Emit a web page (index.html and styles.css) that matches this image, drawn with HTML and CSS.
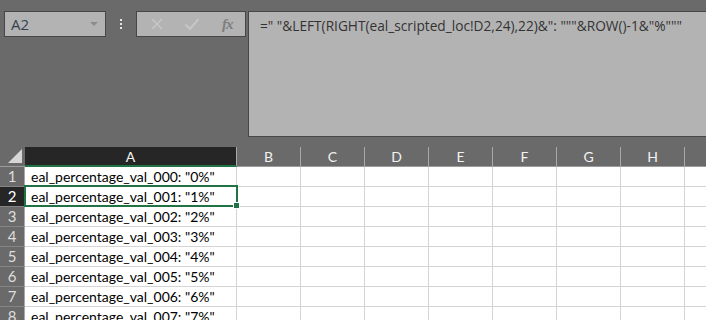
FILE: index.html
```html
<!DOCTYPE html>
<html>
<head>
  <title>Sheet - eal_percentage</title>
  <link rel="stylesheet" href="styles.css">
</head>
<body>
  <div class="toolbar">
    <div class="name-box">
      <span class="name-text">A2</span>
      <span class="name-arrow"></span>
    </div>
    <div class="grip"><i></i><i></i><i></i></div>
    <div class="fx-buttons">
      <svg class="btn-icon btn-cancel" width="14" height="14" viewBox="0 0 14 14">
        <path d="M2 2 L12 12 M12 2 L2 12" stroke="#c6c6c6" stroke-width="1.6" fill="none"/>
      </svg>
      <svg class="btn-icon btn-enter" width="16" height="14" viewBox="0 0 16 14">
        <path d="M1.5 7.5 L6 12 L14.5 2" stroke="#c6c6c6" stroke-width="2" fill="none"/>
      </svg>
      <span class="fx-label">fx</span>
    </div>
    <div class="formula-bar">=" "&amp;LEFT(RIGHT(eal_scripted_loc!D2,24),22)&amp;": """&amp;ROW()-1&amp;"%"""</div>
  </div>

  <div class="sheet">
    <div class="grid">
      <div class="corner"><span class="corner-tri"></span></div>
      <div class="col-head selected">A</div>
      <div class="col-head">B</div>
      <div class="col-head">C</div>
      <div class="col-head">D</div>
      <div class="col-head">E</div>
      <div class="col-head">F</div>
      <div class="col-head">G</div>
      <div class="col-head">H</div>
      <div class="col-head"></div>
    </div>
    <div class="grid" id="rows"></div>
    <div class="selection"><span class="fill-handle"></span></div>
  </div>

  <script>
    var rows = document.getElementById("rows");
    var html = "";
    for (var r = 1; r <= 8; r++) {
      var num = ("00" + (r - 1)).slice(-3);
      html += '<div class="row-head' + (r === 2 ? ' selected' : '') + '">' + r + '</div>';
      html += '<div class="cell">eal_percentage_val_' + num + ': "' + (r - 1) + '%"</div>';
      for (var c = 0; c < 8; c++) {
        html += '<div class="cell"></div>';
      }
    }
    rows.innerHTML = html;
  </script>
</body>
</html>
```

FILE: styles.css
```css
body {
  margin: 0;
  background-color: #6a6a6a;
  font-family: "Open Sans", sans-serif;
  overflow: hidden;
}

.toolbar {
  display: flex;
  align-items: flex-start;
  padding: 11px 0 0 4px;
  height: 126px;
  border-top: 2px solid #707070;
  margin-top: -2px;
}

.name-box {
  width: 87px;
  height: 24px;
  border: 1px solid #464646;
  background-color: #b3b3b3;
  display: flex;
  align-items: center;
  justify-content: space-between;
  padding: 0 7px 0 6px;
}

.name-text {
  font-size: 15px;
  color: #344150;
}

.name-arrow {
  width: 0;
  height: 0;
  border-left: 4px solid transparent;
  border-right: 4px solid transparent;
  border-top: 4px solid #8c8c8c;
}

.grip {
  width: 30px;
  height: 26px;
  display: flex;
  flex-direction: column;
  align-items: center;
  justify-content: center;
  gap: 2px;
}

.grip i {
  width: 2px;
  height: 2px;
  background-color: #e6e6e6;
}

.fx-buttons {
  width: 95px;
  height: 24px;
  border: 1px solid #464646;
  background-color: #b3b3b3;
  display: flex;
  align-items: center;
  padding: 0 0 0 13px;
  margin-right: 2px;
}

.btn-icon {
  display: block;
}

.btn-cancel {
  margin-right: 20px;
}

.btn-enter {
  margin-right: 22px;
}

.fx-label {
  font-family: "Liberation Serif", serif;
  font-style: italic;
  font-weight: bold;
  font-size: 15px;
  color: #7e7e7e;
  letter-spacing: -1px;
}

.formula-bar {
  flex: 1;
  height: 126px;
  border: 1px solid #464646;
  border-right: none;
  background-color: #b3b3b3;
  padding: 4px 0 0 11px;
  font-size: 13.7px;
  color: #333;
  white-space: nowrap;
  box-sizing: border-box;
}

.sheet {
  position: relative;
  margin-top: 10px;
}

.grid {
  display: grid;
  grid-template-columns: 25px 212px repeat(8, 64px);
}

.corner {
  height: 19px;
  position: relative;
  border-bottom: 1px solid #9c9c9c;
}

.corner-tri {
  position: absolute;
  right: 3px;
  bottom: 3px;
  width: 14px;
  height: 14px;
  background-color: #d6d6d6;
  clip-path: polygon(100% 0, 100% 100%, 0 100%);
}

.col-head {
  height: 19px;
  border-bottom: 1px solid #9c9c9c;
  border-right: 1px solid #a8a8a8;
  color: #f2f2f2;
  font-family: "Lato", sans-serif;
  font-size: 14px;
  line-height: 19px;
  text-align: center;
}

.col-head.selected {
  background-color: #262626;
  border-bottom: 2px solid #217346;
  height: 18px;
}

.row-head {
  height: 19px;
  border-bottom: 1px solid #858585;
  border-right: 1px solid #a8a8a8;
  color: #dedede;
  font-family: "Lato", sans-serif;
  font-size: 15px;
  line-height: 19px;
  text-align: center;
}

.row-head.selected {
  background-color: #262626;
  color: #fff;
}

.cell {
  height: 19px;
  background-color: #FFF;
  border-bottom: 1px solid #d4d4d4;
  border-right: 1px solid #d4d4d4;
  font-family: "Lato", sans-serif;
  font-size: 14px;
  line-height: 20px;
  color: #000;
  padding-left: 6px;
  white-space: nowrap;
  overflow: hidden;
}

.selection {
  position: absolute;
  left: 24px;
  top: 38px;
  width: 214px;
  height: 22px;
  border: 2px solid #217346;
  box-sizing: border-box;
}

.fill-handle {
  position: absolute;
  right: -4px;
  bottom: -4px;
  width: 5px;
  height: 5px;
  background-color: #217346;
  border: 1px solid #fff;
}
```
